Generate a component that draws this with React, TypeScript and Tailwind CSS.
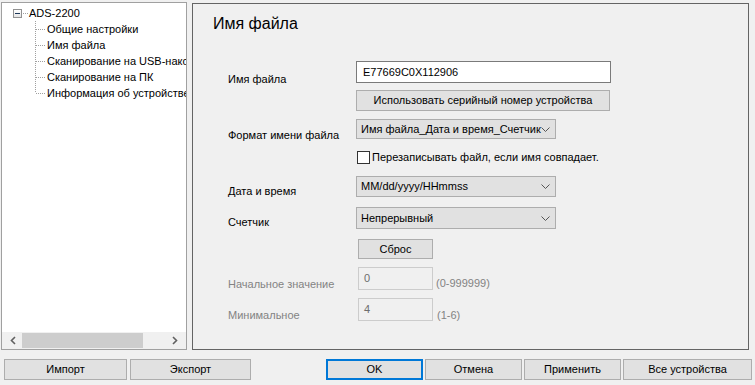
const font = "font-['Liberation_Sans','Noto_Sans',sans-serif]";

const treeItems = [
  "Общие настройки",
  "Имя файла",
  "Сканирование на USB-накопитель",
  "Сканирование на ПК",
  "Информация об устройстве",
];

const Chevron = () => (
  <svg width="9" height="5" viewBox="0 0 9 5" className="shrink-0">
    <path d="M0.5 0.5 L4.5 4.5 L8.5 0.5" fill="none" stroke="#555" strokeWidth="1" />
  </svg>
);

const Select = ({ value, width }: { value: string; width: string }) => (
  <div
    className={`flex h-full shrink-0 items-center justify-between overflow-hidden border border-[#adadad] bg-[#e1e1e1] pl-[4px] pr-[5px] ${width}`}
  >
    <span className="whitespace-nowrap">{value}</span>
    <Chevron />
  </div>
);

const Button = ({ label, className }: { label: string; className: string }) => (
  <div
    className={`flex shrink-0 items-center justify-center whitespace-nowrap border border-[#adadad] bg-[#e1e1e1] ${className}`}
  >
    {label}
  </div>
);

const Tree = () => (
  <div className="relative flex h-[348px] w-[186px] flex-col border border-[#a0a0a0] bg-white">
    <div className="flex-1 overflow-hidden pt-[2px]">
      <div className="flex h-[16px] items-center">
        <div className="ml-[11px] flex h-[9px] w-[9px] shrink-0 items-center justify-center border border-[#919191] bg-[linear-gradient(#ffffff,#e4e4e4)]">
          <div className="h-px w-[5px] bg-[#1e395b]" />
        </div>
        <div className="ml-[1px] w-[5px] shrink-0 border-t border-dotted border-[#a0a0a0]" />
        <span className="ml-[1px] whitespace-nowrap">ADS-2200</span>
      </div>
      <div className="relative">
        <div className="absolute left-[33px] top-0 h-[71px] border-l border-dotted border-[#a0a0a0]" />
        {treeItems.map((t) => (
          <div key={t} className="flex h-[16px] items-center">
            <div className="ml-[34px] w-[9px] shrink-0 border-t border-dotted border-[#a0a0a0]" />
            <span className="ml-[2px] whitespace-nowrap">{t}</span>
          </div>
        ))}
      </div>
    </div>
    <div className="flex h-[17px] items-center bg-[#f0f0f0]">
      <svg width="20" height="17" viewBox="0 0 20 17" className="shrink-0">
        <path d="M13 5 L9.5 8.5 L13 12" fill="none" stroke="#606060" strokeWidth="1.6" />
      </svg>
      <div className="h-[15px] w-[121px] shrink-0 bg-[#cdcdcd]" />
      <div className="flex-1" />
      <svg width="20" height="17" viewBox="0 0 20 17" className="shrink-0">
        <path d="M7 5 L10.5 8.5 L7 12" fill="none" stroke="#606060" strokeWidth="1.6" />
      </svg>
    </div>
  </div>
);

const Panel = () => (
  <div className="h-[347px] w-[557px] border border-[#646464] bg-[#f0f0f0] pl-[20px]">
    <div className="mt-[9px] h-[22px] text-[16px] leading-[22px]">Имя файла</div>

    <div className="mt-[26px] flex pl-[15px]">
      <div className="mt-[10px] w-[128px] shrink-0 leading-[16px]">Имя файла</div>
      <div className="flex flex-col">
        <div className="flex h-[22px] w-[255px] items-center border border-[#7a7a7a] bg-white pl-[6px]">
          E77669C0X112906
        </div>
        <Button label="Использовать серийный номер устройства" className="mt-[7px] h-[21px] w-[254px]" />
      </div>
    </div>

    <div className="mt-[8px] flex h-[20px] pl-[15px]">
      <div className="mt-[8px] w-[128px] shrink-0 whitespace-nowrap leading-[16px]">Формат имени файла</div>
      <Select value="Имя файла_Дата и время_Счетчик" width="w-[200px]" />
    </div>

    <div className="mt-[10px] flex h-[16px] pl-[143px]">
      <div className="ml-[1px] mt-[2px] h-[13px] w-[13px] shrink-0 border border-[#333] bg-white" />
      <span className="ml-[2px] whitespace-nowrap leading-[16px]">
        Перезаписывать файл, если имя совпадает.
      </span>
    </div>

    <div className="mt-[11px] flex h-[21px] pl-[15px]">
      <div className="mt-[7px] w-[128px] shrink-0 leading-[16px]">Дата и время</div>
      <Select value="MM/dd/yyyy/HHmmss" width="w-[200px]" />
    </div>

    <div className="mt-[10px] flex h-[22px] pl-[15px]">
      <div className="mt-[7px] w-[128px] shrink-0 leading-[16px]">Счетчик</div>
      <Select value="Непрерывный" width="w-[200px]" />
    </div>

    <div className="mt-[10px] flex pl-[145px]">
      <Button label="Сброс" className="h-[20px] w-[75px]" />
    </div>

    <div className="mt-[8px] flex h-[23px] pl-[15px] text-[#838383]">
      <div className="mt-[9px] w-[130px] shrink-0 whitespace-nowrap leading-[16px]">Начальное значение</div>
      <div className="h-[23px] w-[75px] shrink-0 border border-[#cccccc] pl-[5px] pt-[2px] leading-[16px] text-[#6d6d6d]">
        0
      </div>
      <span className="ml-[3px] mt-[8px] leading-[16px]">(0-999999)</span>
    </div>

    <div className="mt-[8px] flex h-[23px] pl-[15px] text-[#838383]">
      <div className="mt-[9px] w-[130px] shrink-0 leading-[16px]">Минимальное</div>
      <div className="h-[23px] w-[75px] shrink-0 border border-[#cccccc] pl-[5px] pt-[2px] leading-[16px] text-[#6d6d6d]">
        4
      </div>
      <span className="ml-[4px] mt-[9px] leading-[16px]">(1-6)</span>
    </div>
  </div>
);

export default function App() {
  return (
    <div className={`h-[385px] w-[755px] overflow-hidden bg-[#f0f0f0] text-[11px] text-black ${font}`}>
      <div className="flex h-[350px] items-end">
        <div className="ml-[1px]">
          <Tree />
        </div>
        <div className="ml-[5px]">
          <Panel />
        </div>
      </div>
      <div className="mt-[9px] flex h-[21px]">
        <Button label="Импорт" className="ml-[4px] w-[123px]" />
        <Button label="Экспорт" className="ml-[3px] w-[121px]" />
        <div className="ml-[75px] flex w-[97px] shrink-0 items-center justify-center border-2 border-[#0078d7] bg-[#e1e1e1]">
          OK
        </div>
        <Button label="Отмена" className="ml-[2px] w-[97px]" />
        <Button label="Применить" className="ml-[2px] w-[97px]" />
        <Button label="Все устройства" className="ml-[2px] w-[129px]" />
      </div>
    </div>
  );
}
